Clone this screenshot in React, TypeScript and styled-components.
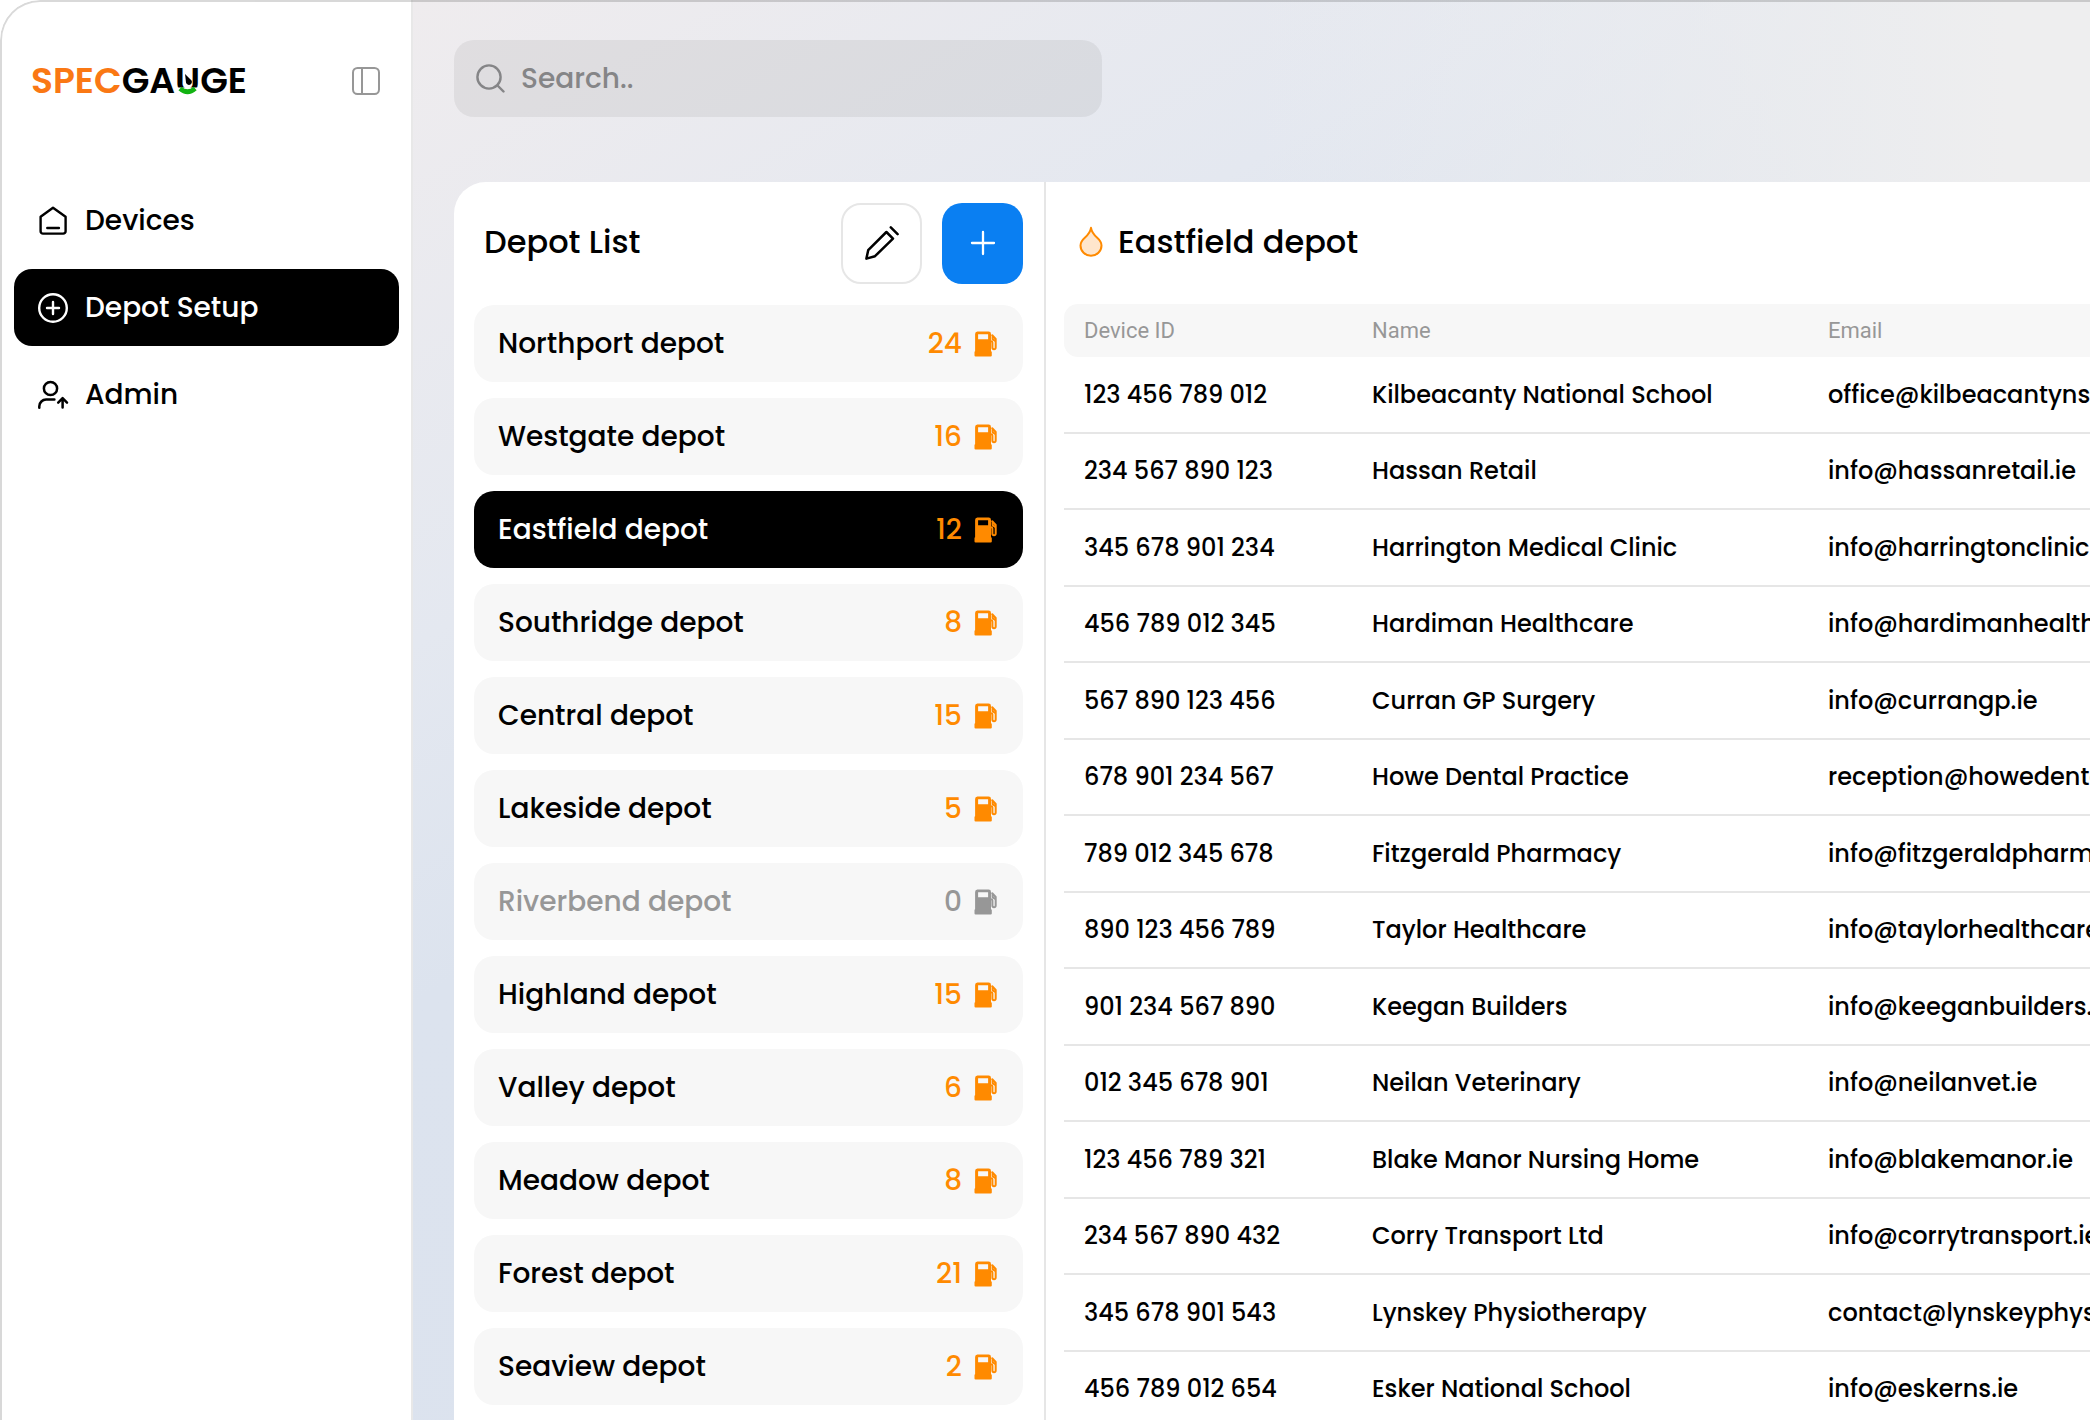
import React from "react";
import styled, { createGlobalStyle, css } from "styled-components";

const color = {
  ink: "#000000",
  muted: "#979797",
  line: "#e6e6e6",
  surface: "#f7f7f7",
  accent: "#ff8a00",
  brand: "#fa7814",
  blue: "#0a7ff2",
};

const GlobalStyle = createGlobalStyle`
  *, *::before, *::after { box-sizing: border-box; }
  body {
    margin: 0;
    background: #ffffff;
    color: ${color.ink};
    font-family: Poppins, Inter, "Open Sans", sans-serif;
    font-weight: 500;
  }
  button, input { font: inherit; }
`;

const Shell = styled.div`
  position: relative;
  display: flex;
  height: 100vh;
  overflow: hidden;
  border-top-left-radius: 40px;

  &::after {
    content: "";
    position: absolute;
    inset: 0;
    border: solid rgba(0, 0, 0, 0.15);
    border-width: 2px 0 0 2px;
    border-top-left-radius: 40px;
    pointer-events: none;
  }
`;

const Sidebar = styled.aside`
  flex: 0 0 413px;
  background: #ffffff;
  border-right: 2px solid #e8e8e8;
`;

const SidebarHeader = styled.div`
  display: flex;
  align-items: center;
  justify-content: space-between;
  height: 182px;
  padding: 0 31px 20px 31px;
`;

const Logo = styled.a`
  font-size: 36px;
  line-height: 42px;
  font-weight: 600;
  color: ${color.ink};
  text-decoration: none;
`;

const LogoAccent = styled.span`
  color: ${color.brand};
`;

const GaugeLetter = styled.span`
  position: relative;
  display: inline-block;

  svg {
    position: absolute;
    left: 0;
    top: 0;
    width: 100%;
    height: 100%;
  }
`;

const IconButton = styled.button`
  display: grid;
  place-items: center;
  padding: 0;
  border: 0;
  background: none;
  color: ${color.muted};
  cursor: pointer;
`;

const Nav = styled.nav`
  display: flex;
  flex-direction: column;
  gap: 10px;
  padding: 0 12px 0 14px;
`;

const NavLink = styled.a<{ $active?: boolean }>`
  display: flex;
  align-items: center;
  gap: 15px;
  height: 77px;
  padding: 0 22px;
  border-radius: 18px;
  font-size: 28px;
  line-height: 40px;
  text-decoration: none;
  color: ${(p) => (p.$active ? "#ffffff" : color.ink)};
  background: ${(p) => (p.$active ? color.ink : "transparent")};
`;

const Main = styled.main`
  flex: 1;
  min-width: 0;
  display: flex;
  flex-direction: column;
  gap: 65px;
  padding: 40px 0 0 41px;
  background:
    linear-gradient(90deg, rgba(238, 238, 239, 0) 50%, #eeeeef 95%),
    linear-gradient(150deg, #efecee 0%, #e4e8f0 27%, #dce3ee 42%, #dbe2ee 100%);
`;

const SearchBox = styled.label`
  display: flex;
  flex: none;
  align-items: center;
  gap: 16px;
  width: 100%;
  max-width: 648px;
  height: 77px;
  padding: 0 22px;
  border-radius: 20px;
  background: rgba(0, 0, 0, 0.06);
  color: #858587;
`;

const SearchInput = styled.input`
  flex: 1;
  min-width: 0;
  padding: 0;
  border: 0;
  outline: 0;
  background: none;
  font-size: 28px;
  line-height: 40px;
  color: ${color.ink};

  &::placeholder {
    color: #858587;
    opacity: 1;
  }
`;

const Panel = styled.div`
  flex: 1;
  min-height: 0;
  display: flex;
  overflow: hidden;
  background: #ffffff;
  border-top-left-radius: 32px;
`;

const DepotColumn = styled.section`
  flex: 0 0 592px;
  padding: 0 21px 0 20px;
  border-right: 2px solid ${color.line};
`;

const DetailColumn = styled.section`
  flex: 1;
  min-width: 0;
  padding-left: 18px;
`;

const PanelHeader = styled.header`
  display: flex;
  align-items: center;
  height: 122px;
`;

const Heading = styled.h2`
  margin: 0;
  font-size: 32px;
  line-height: 40px;
  font-weight: 500;
`;

const ListHeader = styled(PanelHeader)`
  gap: 20px;
  padding-left: 10px;

  ${Heading} {
    flex: 1;
    padding-bottom: 3px;
  }
`;

const DetailHeader = styled(PanelHeader)`
  gap: 15px;
  padding: 0 0 3px 15px;
`;

const SquareButton = styled(IconButton)<{ $primary?: boolean }>`
  width: 81px;
  height: 81px;
  border-radius: 20px;
  ${(p) =>
    p.$primary
      ? css`
          background: ${color.blue};
          color: #ffffff;
        `
      : css`
          border: 2px solid ${color.line};
          background: #ffffff;
          color: ${color.ink};
        `}
`;

const DepotList = styled.ul`
  display: flex;
  flex-direction: column;
  gap: 16px;
  margin: 0;
  padding: 1px 0 0;
  list-style: none;
`;

const DepotButton = styled.button<{ $active?: boolean; $empty?: boolean }>`
  display: flex;
  align-items: center;
  gap: 12px;
  width: 100%;
  height: 77px;
  padding: 0 26px 0 24px;
  border: 0;
  border-radius: 20px;
  font-size: 28px;
  line-height: 40px;
  text-align: left;
  cursor: pointer;
  background: ${(p) => (p.$active ? color.ink : color.surface)};
  color: ${(p) => (p.$active ? "#ffffff" : p.$empty ? color.muted : color.ink)};
`;

const DepotName = styled.span`
  flex: 1;
`;

const DepotCount = styled.span<{ $empty?: boolean }>`
  display: flex;
  align-items: center;
  gap: 12px;
  color: ${(p) => (p.$empty ? color.muted : color.accent)};
`;

const Table = styled.table`
  width: 100%;
  table-layout: fixed;
  border-collapse: separate;
  border-spacing: 0;
`;

const IdCol = styled.col`
  width: 288px;
`;

const NameCol = styled.col`
  width: 456px;
`;

const HeadCell = styled.th`
  height: 53px;
  padding: 0 0 0 20px;
  background: ${color.surface};
  color: ${color.muted};
  font-family: Roboto, sans-serif;
  font-size: 22px;
  line-height: 30px;
  font-weight: 400;
  text-align: left;

  &:first-child {
    border-radius: 14px 0 0 14px;
  }
`;

const Row = styled.tr`
  height: 77px;

  &:nth-child(even) {
    height: 76px;
  }
`;

const Cell = styled.td`
  padding: 0 0 0 20px;
  border-bottom: 2px solid ${color.line};
  font-size: 24px;
  line-height: 40px;
  white-space: nowrap;
`;

const lineIcon = {
  fill: "none",
  stroke: "currentColor",
  strokeLinecap: "round",
  strokeLinejoin: "round",
  "aria-hidden": true,
} as const;

const HomeIcon = () => (
  <svg width="34" height="34" viewBox="-1 -1 34 34" strokeWidth="2.4" {...lineIcon}>
    <path d="M16 2.8 28.6 11.8V26.2a2.4 2.4 0 0 1-2.4 2.4H6a2.4 2.4 0 0 1-2.4-2.4V11.8Z" />
    <path d="M10.3 23h11.6" />
  </svg>
);

const PlusCircleIcon = () => (
  <svg width="34" height="34" viewBox="-1 -1 34 34" strokeWidth="2.4" {...lineIcon}>
    <circle cx="16" cy="16" r="13.8" />
    <path d="M16 10v12M10 16h12" />
  </svg>
);

const UserUpIcon = () => (
  <svg width="34" height="34" viewBox="-1 -1 34 34" strokeWidth="2.5" {...lineIcon}>
    <circle cx="13.5" cy="9.5" r="6.6" />
    <path d="M2.3 28.8v-1.6a6.8 6.8 0 0 1 6.8-6.6h8.3" />
    <path d="M25.6 28.6v-9M21.2 23.6l4.4-4.4 4.4 4.4" />
  </svg>
);

const SidebarIcon = () => (
  <svg width="28" height="28" viewBox="0 0 28 28" strokeWidth="2" {...lineIcon}>
    <rect x="1" y="1" width="26" height="26" rx="4.5" />
    <path d="M10 1v26" />
  </svg>
);

const SearchIcon = () => (
  <svg width="29" height="29" viewBox="0 0 29 29" strokeWidth="2.4" {...lineIcon}>
    <circle cx="13" cy="13" r="11.6" />
    <path d="m21.5 21.5 6 6" />
  </svg>
);

const PencilIcon = () => (
  <svg width="34" height="34" viewBox="0 0 34 34" strokeWidth="2.5" {...lineIcon}>
    <path d="M1.4 32.6 3.2 24.2 21.4 6l6.6 6.6-18 17.6Z" />
    <path d="m25.8 1.4 6.8 6.8" />
  </svg>
);

const PlusIcon = () => (
  <svg width="26" height="26" viewBox="0 0 26 26" strokeWidth="2.3" {...lineIcon}>
    <path d="M13 2v22M2 13h22" />
  </svg>
);

const PumpIcon = () => (
  <svg width="23" height="26" viewBox="0 0 23 26" aria-hidden="true">
    <path
      fill="currentColor"
      fillRule="evenodd"
      d="M3.4.5h11.2A2.4 2.4 0 0 1 17 2.9v17.3l.8.6v3.6a1.1 1.1 0 0 1-1.1 1.1H1.6A1.1 1.1 0 0 1 .5 24.4v-3.6l.6-.6V2.900A2.400 2.400 0 0 1 3.400.5ZM4.100 3.300v5h10v-5Z"
    />
    <path
      fill="none"
      stroke="currentColor"
      strokeWidth="2"
      strokeLinecap="round"
      strokeLinejoin="round"
      d="M16.500 10.200h.6q1.300 0 1.300 1.300v5q0 1.800 1.600 1.800t1.700-1.800V8L18.200 4.200M18.600 5v3.200l2.900 2"
    />
  </svg>
);

const DropIcon = () => (
  <svg width="24" height="31" viewBox="0 0 24 31" aria-hidden="true">
    <path
      fill="#ffe6cc"
      stroke={color.accent}
      strokeWidth="2"
      strokeLinejoin="round"
      d="M12 1.8C11.3 6.5 8.600 9.200 5.800 11.700 3 14.200 1.500 16.300 1.500 19.500a10.500 10.300 0 0 0 21 0c0-3.200-1.500-5.300-4.300-7.800C15.400 9.200 12.700 6.500 12 1.800Z"
    />
  </svg>
);

const GaugeMark = () => (
  <svg viewBox="0 0 25 42" preserveAspectRatio="none" aria-hidden="true">
    <path d="M0 27.5H25V38H0Z" fill="#ffffff" />
    <path d="M5 28.5q7.500 6.500 15 0" fill="none" stroke="#12b312" strokeWidth="4.8" />
    <path d="m10 14 5.200 5.200a3 3 0 1 1-4.200 3.600Z" fill="#000000" />
  </svg>
);

const depots: Array<[string, number]> = [
  ["Northport depot", 24],
  ["Westgate depot", 16],
  ["Eastfield depot", 12],
  ["Southridge depot", 8],
  ["Central depot", 15],
  ["Lakeside depot", 5],
  ["Riverbend depot", 0],
  ["Highland depot", 15],
  ["Valley depot", 6],
  ["Meadow depot", 8],
  ["Forest depot", 21],
  ["Seaview depot", 2],
];

const devices: Array<[string, string, string]> = [
  ["123 456 789 012", "Kilbeacanty National School", "office@kilbeacantyns.ie"],
  ["234 567 890 123", "Hassan Retail", "info@hassanretail.ie"],
  ["345 678 901 234", "Harrington Medical Clinic", "info@harringtonclinic.ie"],
  ["456 789 012 345", "Hardiman Healthcare", "info@hardimanhealthcare.ie"],
  ["567 890 123 456", "Curran GP Surgery", "info@currangp.ie"],
  ["678 901 234 567", "Howe Dental Practice", "reception@howedental.ie"],
  ["789 012 345 678", "Fitzgerald Pharmacy", "info@fitzgeraldpharmacy.ie"],
  ["890 123 456 789", "Taylor Healthcare", "info@taylorhealthcare.ie"],
  ["901 234 567 890", "Keegan Builders", "info@keeganbuilders.ie"],
  ["012 345 678 901", "Neilan Veterinary", "info@neilanvet.ie"],
  ["123 456 789 321", "Blake Manor Nursing Home", "info@blakemanor.ie"],
  ["234 567 890 432", "Corry Transport Ltd", "info@corrytransport.ie"],
  ["345 678 901 543", "Lynskey Physiotherapy", "contact@lynskeyphysio.ie"],
  ["456 789 012 654", "Esker National School", "info@eskerns.ie"],
];

export default function App() {
  const selected = "Eastfield depot";

  return (
    <>
      <GlobalStyle />
      <Shell>
        <Sidebar>
          <SidebarHeader>
            <Logo href="#home">
              <LogoAccent>SPEC</LogoAccent>GA
              <GaugeLetter>
                U<GaugeMark />
              </GaugeLetter>
              GE
            </Logo>
            <IconButton type="button" aria-label="Toggle sidebar">
              <SidebarIcon />
            </IconButton>
          </SidebarHeader>
          <Nav>
            <NavLink href="#devices">
              <HomeIcon />
              Devices
            </NavLink>
            <NavLink href="#depots" $active aria-current="page">
              <PlusCircleIcon />
              Depot Setup
            </NavLink>
            <NavLink href="#admin">
              <UserUpIcon />
              Admin
            </NavLink>
          </Nav>
        </Sidebar>

        <Main>
          <SearchBox>
            <SearchIcon />
            <SearchInput type="text" placeholder="Search.." aria-label="Search" />
          </SearchBox>

          <Panel>
            <DepotColumn>
              <ListHeader>
                <Heading>Depot List</Heading>
                <SquareButton type="button" aria-label="Edit depots">
                  <PencilIcon />
                </SquareButton>
                <SquareButton type="button" $primary aria-label="Add depot">
                  <PlusIcon />
                </SquareButton>
              </ListHeader>
              <DepotList>
                {depots.map(([name, count]) => (
                  <li key={name}>
                    <DepotButton type="button" $active={name === selected} $empty={count === 0}>
                      <DepotName>{name}</DepotName>
                      <DepotCount $empty={count === 0}>
                        {count}
                        <PumpIcon />
                      </DepotCount>
                    </DepotButton>
                  </li>
                ))}
              </DepotList>
            </DepotColumn>

            <DetailColumn>
              <DetailHeader>
                <DropIcon />
                <Heading>{selected}</Heading>
              </DetailHeader>
              <Table>
                <colgroup>
                  <IdCol />
                  <NameCol />
                  <col />
                </colgroup>
                <thead>
                  <tr>
                    <HeadCell scope="col">Device ID</HeadCell>
                    <HeadCell scope="col">Name</HeadCell>
                    <HeadCell scope="col">Email</HeadCell>
                  </tr>
                </thead>
                <tbody>
                  {devices.map(([id, name, email]) => (
                    <Row key={id}>
                      <Cell>{id}</Cell>
                      <Cell>{name}</Cell>
                      <Cell>{email}</Cell>
                    </Row>
                  ))}
                </tbody>
              </Table>
            </DetailColumn>
          </Panel>
        </Main>
      </Shell>
    </>
  );
}
